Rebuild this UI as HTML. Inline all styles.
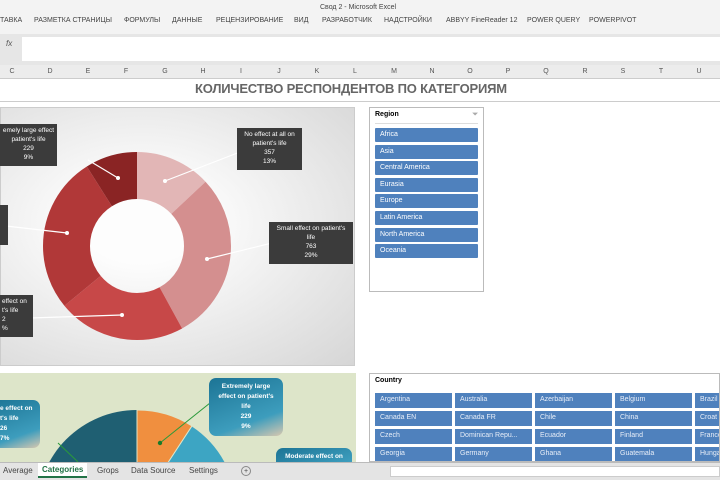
<!DOCTYPE html>
<html><head><meta charset="utf-8"><style>
*{margin:0;padding:0;box-sizing:border-box}
html,body{width:720px;height:480px;overflow:hidden}
body{background:#fff;font-family:"Liberation Sans","Noto Sans CJK SC",sans-serif;position:relative}
.abs{position:absolute}
.menu{left:0;top:0;width:720px;height:34px;background:#f3f3f3}
.menu span{position:absolute;top:17px;font-size:7px;color:#444;white-space:nowrap}
.fbar{left:0;top:34px;width:720px;height:31px;background:#e6e6e6}
.fbox{left:22px;top:37px;width:698px;height:24px;background:#fff}
.cols{left:0;top:65px;width:720px;height:14px;background:#ececec;border-bottom:1px solid #ccc}
.cols span{position:absolute;top:3px;font-size:7px;color:#555;width:20px;text-align:center}
.lbl{background:#3b3b3b;color:#fff;font-size:6.5px;text-align:center;line-height:9px;padding:2px 2px;white-space:nowrap;overflow:hidden}
.sl{background:#4f81bd;color:#fff;font-size:7px;padding:3px 5px;height:14px;margin-bottom:2.6px;border-radius:1px}
.cb{position:absolute;background:#4f81bd;color:#e8eef8;font-size:7px;padding:3px 5px;height:15px;width:77px;white-space:nowrap;overflow:hidden}
.tl{background:linear-gradient(160deg,#1c7495,#3d9dbd 70%,#d8c8b0);color:#fff;font-size:6.5px;font-weight:bold;text-align:center;line-height:10px;border-radius:7px;padding:4px 2px;white-space:nowrap;overflow:hidden}
.tabs{left:0;top:462px;width:720px;height:18px;background:#e4e4e4;border-top:1px solid #bbb;overflow:hidden}
.tabs span{position:absolute;top:3px;font-size:8px;color:#444}
</style></head><body>
<div class="abs menu">
<span style="top:4px;left:320px">Свод 2 - Microsoft Excel</span>
<span style="left:0">ТАВКА</span><span style="left:34px">РАЗМЕТКА СТРАНИЦЫ</span><span style="left:124px">ФОРМУЛЫ</span><span style="left:172px">ДАННЫЕ</span><span style="left:216px">РЕЦЕНЗИРОВАНИЕ</span><span style="left:294px">ВИД</span><span style="left:322px">РАЗРАБОТЧИК</span><span style="left:384px">НАДСТРОЙКИ</span><span style="left:446px">ABBYY FineReader 12</span><span style="left:527px">POWER QUERY</span><span style="left:589px">POWERPIVOT</span>
</div>
<div class="abs fbar"></div><div class="abs fbox"></div>
<div class="abs" style="left:6px;top:39px;font-size:8px;font-style:italic;color:#555">fx</div>
<div class="abs cols">
<span style="left:2px">C</span><span style="left:40px">D</span><span style="left:78px">E</span><span style="left:116px">F</span><span style="left:155px">G</span><span style="left:193px">H</span><span style="left:231px">I</span><span style="left:269px">J</span><span style="left:307px">K</span><span style="left:345px">L</span><span style="left:384px">M</span><span style="left:422px">N</span><span style="left:460px">O</span><span style="left:498px">P</span><span style="left:536px">Q</span><span style="left:575px">R</span><span style="left:613px">S</span><span style="left:651px">T</span><span style="left:689px">U</span>
</div>
<div class="abs" style="left:195px;top:81px;width:330px;font-size:13px;font-weight:bold;color:#666;white-space:nowrap;letter-spacing:-0.2px">КОЛИЧЕСТВО РЕСПОНДЕНТОВ ПО КАТЕГОРИЯМ</div>
<div class="abs" style="left:0;top:101px;width:720px;height:1px;background:#ccc"></div>
<div class="abs" style="left:0;top:107px;width:355px;height:259px;background:radial-gradient(ellipse at 40% 45%,#fdfdfd 20%,#e2e2e2 75%,#d6d6d6);border:1px solid #ccc"></div>
<svg class="abs" style="left:0;top:0" width="360" height="370">
<g transform="rotate(-90 137 246)" fill="none" stroke-width="47">
<circle cx="137" cy="246" r="70.5" stroke="#e2b6b6" stroke-dasharray="57.6 443" stroke-dashoffset="0"/>
<circle cx="137" cy="246" r="70.5" stroke="#d48f8f" stroke-dasharray="128.5 443" stroke-dashoffset="-57.6"/>
<circle cx="137" cy="246" r="70.5" stroke="#c74848" stroke-dasharray="97.5 443" stroke-dashoffset="-186.1"/>
<circle cx="137" cy="246" r="70.5" stroke="#b13838" stroke-dasharray="119.5 443" stroke-dashoffset="-283.6"/>
<circle cx="137" cy="246" r="70.5" stroke="#8a2424" stroke-dasharray="40 443" stroke-dashoffset="-403.1"/>
</g>
<g stroke="#fff" stroke-width="1.2">
<line x1="165" y1="181" x2="240" y2="152"/><line x1="207" y1="259" x2="272" y2="243"/>
<line x1="122" y1="315" x2="30" y2="318"/><line x1="67" y1="233" x2="6" y2="226"/><line x1="118" y1="178" x2="88" y2="160"/>
</g>
<g fill="#fff"><circle cx="165" cy="181" r="2"/><circle cx="207" cy="259" r="2"/><circle cx="122" cy="315" r="2"/><circle cx="67" cy="233" r="2"/><circle cx="118" cy="178" r="2"/></g>
</svg>
<div class="abs lbl" style="left:0;top:124px;width:57px;height:42px">emely large effect<br>patient's life<br>229<br>9%</div>
<div class="abs lbl" style="left:237px;top:128px;width:65px;height:42px">No effect at all on<br>patient's life<br>357<br>13%</div>
<div class="abs lbl" style="left:269px;top:222px;width:84px;height:42px">Small effect on patient's<br>life<br>763<br>29%</div>
<div class="abs lbl" style="left:0;top:205px;width:8px;height:40px"></div>
<div class="abs lbl" style="left:0;top:295px;width:33px;height:42px;text-align:left">effect on<br>t's life<br>2<br>%</div>
<div class="abs" style="left:369px;top:107px;width:115px;height:185px;border:1px solid #bbb;background:#fff;padding:3px 5px">
<div style="font-size:7px;font-weight:bold;margin-bottom:4px;height:13px;border-bottom:1px solid #ddd">Region<span style="float:right;color:#aaa">⏷</span></div>
<div class="sl">Africa</div><div class="sl">Asia</div><div class="sl">Central America</div><div class="sl">Eurasia</div><div class="sl">Europe</div><div class="sl">Latin America</div><div class="sl">North America</div><div class="sl">Oceania</div>
</div>
<div class="abs" style="left:0;top:373px;width:356px;height:89px;background:#dde5c9;overflow:hidden">
<svg width="356" height="89" class="abs" style="left:0;top:0">
<path d="M137 137 L37 137 A100 100 0 0 1 137 37 Z" fill="#1f5f72"/>
<path d="M137 137 L137 37 A100 100 0 0 1 192 53 Z" fill="#f08f3f" stroke="#dde5c9"/>
<path d="M137 137 L192 53 A100 100 0 0 1 237 137 Z" fill="#3da5c3" stroke="#dde5c9"/>
<g stroke="#2a9a3a" stroke-width="1"><line x1="160" y1="70" x2="210" y2="30"/><line x1="58" y1="70" x2="78" y2="89"/></g>
<circle cx="160" cy="70" r="2.2" fill="#1a7a2a"/>
</svg>
<div class="abs tl" style="left:209px;top:5px;width:74px;height:58px">Extremely large<br>effect on patient's<br>life<br>229<br>9%</div>
<div class="abs tl" style="left:-10px;top:27px;width:50px;height:48px;text-align:left;padding-left:10px">e effect on<br>t's life<br>26<br>7%</div>
<div class="abs tl" style="left:276px;top:75px;width:76px;height:30px">Moderate effect on</div>
</div>
<div class="abs" style="left:369px;top:373px;width:351px;height:89px;border:1px solid #bbb;background:#fff;overflow:hidden">
<div style="font-size:7px;font-weight:bold;margin:3px 5px">Country</div>
<div class="cb" style="left:5px;top:19px">Argentina</div><div class="cb" style="left:85px;top:19px">Australia</div><div class="cb" style="left:165px;top:19px">Azerbaijan</div><div class="cb" style="left:245px;top:19px">Belgium</div><div class="cb" style="left:325px;top:19px">Brazil</div>
<div class="cb" style="left:5px;top:37px">Canada EN</div><div class="cb" style="left:85px;top:37px">Canada FR</div><div class="cb" style="left:165px;top:37px">Chile</div><div class="cb" style="left:245px;top:37px">China</div><div class="cb" style="left:325px;top:37px">Croat</div>
<div class="cb" style="left:5px;top:55px">Czech</div><div class="cb" style="left:85px;top:55px">Dominican Repu...</div><div class="cb" style="left:165px;top:55px">Ecuador</div><div class="cb" style="left:245px;top:55px">Finland</div><div class="cb" style="left:325px;top:55px">France</div>
<div class="cb" style="left:5px;top:73px">Georgia</div><div class="cb" style="left:85px;top:73px">Germany</div><div class="cb" style="left:165px;top:73px">Ghana</div><div class="cb" style="left:245px;top:73px">Guatemala</div><div class="cb" style="left:325px;top:73px">Hunga</div>
</div>
<div class="abs tabs">
<span style="left:3px">Average</span>
<span style="left:38px;top:0;background:#fff;padding:2px 4px;color:#217346;font-weight:bold;border-bottom:2px solid #217346">Categories</span>
<span style="left:97px">Grops</span><span style="left:131px">Data Source</span><span style="left:189px">Settings</span>
<span style="left:241px;border:1px solid #888;border-radius:50%;width:10px;height:10px;font-size:7px;line-height:9px;text-align:center">+</span>
<div class="abs" style="left:390px;top:3px;width:330px;height:11px;background:#fff;border:1px solid #ccc"></div>
</div>
</body></html>
